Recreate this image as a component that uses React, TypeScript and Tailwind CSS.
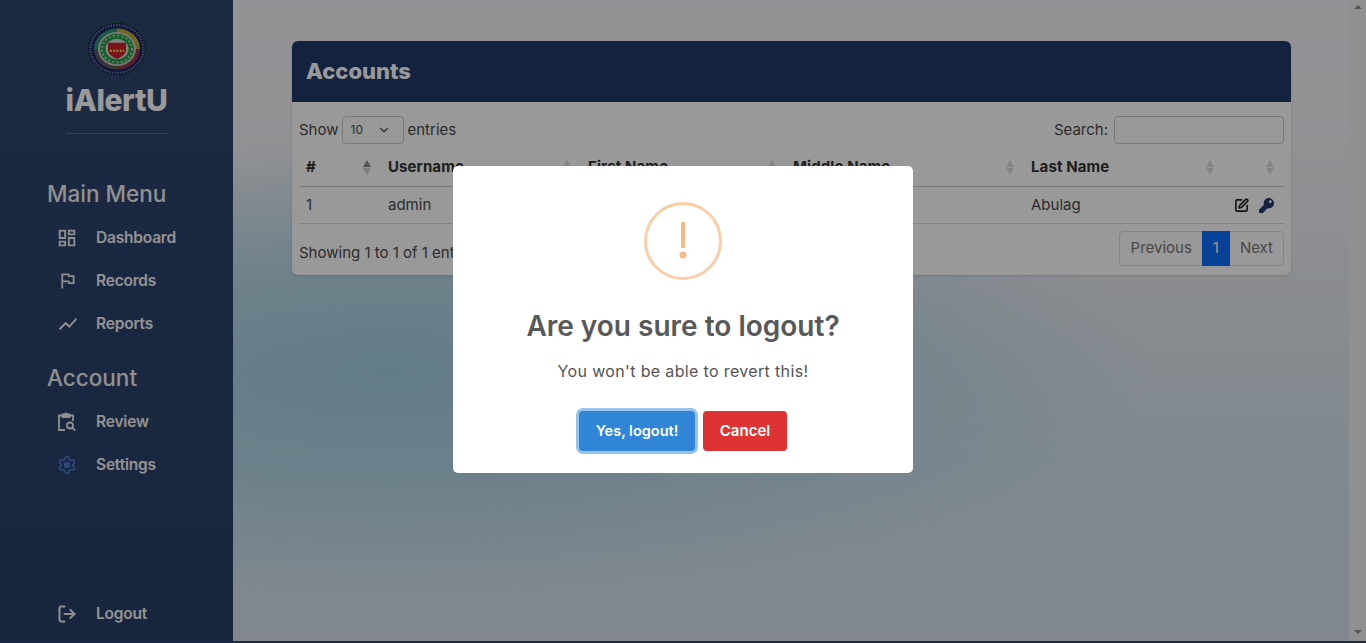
import { ChevronDown, LogOut, SquarePen } from "lucide-react"
import { FaKey } from "react-icons/fa"
import { MdOutlineDashboard, MdOutlineFlag, MdShowChart } from "react-icons/md"

const font = { fontFamily: '"Inter", "Noto Sans", sans-serif' }
const cols = "grid-cols-[82px_200px_205px_238px_200px_60px]"

const Logo = () => (
  <svg width="60" height="54" viewBox="0 0 60 60" preserveAspectRatio="none">
    <circle cx="30" cy="30" r="29.5" fill="#142060" stroke="#1d5a3a" strokeWidth="1" />
    <circle cx="30" cy="30" r="26.5" fill="none" stroke="#a8acb8" strokeWidth="3" strokeDasharray="1.5 1.3" opacity="0.6" />
    <path d="M30 7a23 23 0 0 1 23 23H30z" fill="#c2a83a" />
    <path d="M53 30a23 23 0 0 1-23 23V30z" fill="#943448" />
    <path d="M30 53A23 23 0 0 1 7 30h23z" fill="#5a5a60" />
    <path d="M7 30A23 23 0 0 1 30 7v23z" fill="#338f78" />
    <circle cx="30" cy="30" r="19" fill="#c8c8c4" />
    <circle cx="30" cy="30" r="17" fill="#20a046" />
    <circle cx="30" cy="30" r="15" fill="none" stroke="#c0c6bc" strokeWidth="2" strokeDasharray="2 2.4" />
    <circle cx="30" cy="30" r="11.5" fill="#d8d8d2" />
    <path d="M21 23h18v8c0 5-5 8-9 10-4-2-9-5-9-10z" fill="#c8242a" />
    <path d="M23 32h14" stroke="#eed44e" strokeWidth="2.5" strokeDasharray="2 1.2" />
  </svg>
)

const ReviewIcon = () => (
  <svg width="20" height="20" viewBox="0 0 20 20" fill="none" stroke="currentColor" strokeWidth="1.8">
    <path d="M8 18H2V3.5h3M12 3.5h4V9" />
    <path d="M5.5 5V2.5h1.8a1.8 1.8 0 0 1 3.4 0h1.8V5z" fill="currentColor" />
    <circle cx="13" cy="13.5" r="3" />
    <path d="M15.2 15.7l3 3" />
  </svg>
)

const GearIcon = () => (
  <svg width="20" height="20" viewBox="0 0 24 24" fill="none" stroke="#4a78d0" strokeWidth="2">
    <path d="M9.671 4.136a2.34 2.34 0 0 1 4.659 0 2.34 2.34 0 0 0 3.319 1.915 2.34 2.34 0 0 1 2.33 4.033 2.34 2.34 0 0 0 0 3.831 2.34 2.34 0 0 1-2.33 4.033 2.34 2.34 0 0 0-3.319 1.915 2.34 2.34 0 0 1-4.659 0 2.34 2.34 0 0 0-3.32-1.915 2.34 2.34 0 0 1-2.33-4.033 2.34 2.34 0 0 0 0-3.831A2.34 2.34 0 0 1 6.35 6.051a2.34 2.34 0 0 0 3.319-1.915" />
    <circle cx="12" cy="12" r="3" fill="#4a78d0" />
  </svg>
)

const SideItem = ({ icon, label }: { icon: React.ReactNode; label: string }) => (
  <div className="flex h-[43px] items-center">
    <div className="w-[96px] pl-[57px] text-[#f0f0f0]">{icon}</div>
    <span className="text-[15.5px] font-semibold tracking-[-0.2px] text-[#f5f5f5]">{label}</span>
  </div>
)

const Sort = ({ active }: { active?: boolean }) => (
  <span className="flex flex-col gap-px">
    <span className={`h-0 w-0 border-x-[4px] border-b-[7px] border-x-transparent ${active ? "border-b-[#8c8c8c]" : "border-b-[#dcdcdc]"}`} />
    <span className={`h-0 w-0 border-x-[4px] border-t-[7px] border-x-transparent ${active ? "border-t-[#cfcfcf]" : "border-t-[#dcdcdc]"}`} />
  </span>
)

const Th = ({ label, active }: { label: string; active?: boolean }) => (
  <div className="flex items-center justify-between pr-[10px] pl-[7px]">
    <span>{label}</span>
    <Sort active={active} />
  </div>
)

export default function App() {
  return (
    <div style={font} className="relative h-[643px] w-[1366px] overflow-hidden bg-[#f1f1f1]">
      <div className="flex h-[641px] w-full">
        <aside className="flex w-[233px] shrink-0 flex-col bg-[linear-gradient(180deg,#2e4670,#283f68)]">
          <div className="flex flex-col items-center pt-[22px]">
            <Logo />
            <h1 className="mt-[4px] text-[30px] leading-[40px] font-extrabold tracking-[-0.4px] text-white">iAlertU</h1>
            <div className="mt-[13px] h-px w-[101px] bg-[#5b6f90]" />
          </div>
          <h2 className="mt-[46px] pl-[47px] text-[22.5px] leading-[28px] font-medium text-[#f0f0f0]">Main Menu</h2>
          <div className="mt-[8px]">
            <SideItem icon={<MdOutlineDashboard size={22} className="-ml-[1px]" />} label="Dashboard" />
            <SideItem icon={<MdOutlineFlag size={21} />} label="Records" />
            <SideItem icon={<MdShowChart size={22} />} label="Reports" />
          </div>
          <h2 className="mt-[19px] pl-[47px] text-[22.5px] leading-[28px] font-medium text-[#f0f0f0]">Account</h2>
          <div className="mt-[8px]">
            <SideItem icon={<ReviewIcon />} label="Review" />
            <SideItem icon={<GearIcon />} label="Settings" />
          </div>
          <div className="mt-auto mb-[6px]">
            <SideItem icon={<LogOut size={20} strokeWidth={2.4} />} label="Logout" />
          </div>
        </aside>
        <main className="flex-1 bg-[radial-gradient(ellipse_760px_230px_at_14%_58%,#a4cfe2_0%,rgba(170,210,228,0.75)_45%,rgba(170,210,228,0)_100%),linear-gradient(180deg,#f6f6fc_0%,#f2f2f7_25%,#e6eaf0_46%,#d4e4ee_72%,#d9e1ee_100%)] pt-[41px] pr-[58px] pl-[59px]">
          <section className="h-[234px] rounded-md bg-white shadow-sm">
            <div className="flex h-[61px] items-center rounded-t-md bg-[#1e3a69] pl-[14px]">
              <span className="text-[22px] font-extrabold text-white">Accounts</span>
            </div>
            <div className="px-[7px] text-[15px] text-[#4a4a4a]">
              <div className="flex h-[46px] items-start justify-between pt-[14px]">
                <div className="flex items-center gap-[2px]">
                  <span>Show</span>
                  <div className="ml-[1px] flex h-[28px] w-[62px] items-center justify-between rounded border border-[#ccc] pr-3 pl-2 text-[12px]">
                    10 <ChevronDown size={14} />
                  </div>
                  <span className="ml-[2px]">entries</span>
                </div>
                <div className="flex items-center gap-[6px]">
                  <span>Search:</span>
                  <div className="h-[28px] w-[170px] rounded border border-[#ccc]" />
                </div>
              </div>
              <div className={`grid h-[39px] items-center border-b border-[#ccc] font-bold tracking-[0.1px] text-[#333] ${cols}`}>
                <Th label="#" active />
                <Th label="Username" />
                <Th label="First Name" />
                <Th label="Middle Name" />
                <Th label="Last Name" />
                <div className="flex justify-end pr-[10px]"><Sort /></div>
              </div>
              <div className={`grid h-[37px] items-center border-b border-[#ddd] ${cols}`}>
                <div className="pl-[7px]">1</div>
                <div className="pl-[7px]">admin</div>
                <div />
                <div />
                <div className="pl-[7px]">Abulag</div>
                <div className="flex justify-end gap-[10px] pr-[10px]">
                  <SquarePen size={15} strokeWidth={2.6} className="text-[#222]" />
                  <FaKey size={15} className="text-[#1e3a69]" />
                </div>
              </div>
              <div className="flex items-start justify-between pt-[7px]">
                <span className="pt-[12px] leading-[20px]">Showing 1 to 1 of 1 entries</span>
                <div className="flex h-[35px] items-center rounded border border-[#ddd] text-[#777]">
                  <span className="pr-[10px] pl-[11px]">Previous</span>
                  <span className="flex h-[35px] w-[28px] items-center justify-center bg-[#0d6efd] text-white">1</span>
                  <span className="px-[10px]">Next</span>
                </div>
              </div>
            </div>
          </section>
        </main>
        <div className="flex w-[17px] shrink-0 flex-col justify-between bg-[#f1f1f1] pt-[5px] pb-[7px]">
          <span className="mx-auto h-0 w-0 border-x-[4px] border-b-[4px] border-x-transparent border-b-[#8e8e8e]" />
          <span className="mx-auto h-0 w-0 border-x-[4px] border-t-[4px] border-x-transparent border-t-[#8e8e8e]" />
        </div>
      </div>
      <div className="h-[2px] bg-[#2d4878]" />
      {/* modal backdrop */}
      <div className="absolute inset-0 flex items-start justify-center bg-black/40 pt-[166px]">
        <div className="flex h-[307px] w-[460px] flex-col items-center rounded-[5px] bg-white">
          <div className="mt-[36px] flex h-[78px] w-[78px] items-center justify-center rounded-full border-[3px] border-[#facea8]">
            <svg width="10" height="40" viewBox="0 0 10 40">
              <rect x="3" y="1" width="4" height="26" fill="#f8bb86" />
              <circle cx="5" cy="34" r="3.5" fill="#f8bb86" />
            </svg>
          </div>
          <h2 className="mt-[28px] text-[28px] leading-[36px] font-semibold text-[#595959]">Are you sure to logout?</h2>
          <p className="mt-[15px] text-[16px] leading-[24px] tracking-[0.35px] text-[#545454]">You won't be able to revert this!</p>
          <div className="mt-[28px] flex items-center gap-[8px]">
            <button className="h-[40px] w-[116px] rounded bg-[#3085d6] text-[14.5px] font-semibold text-white shadow-[0_0_0_3px_rgba(48,133,214,0.5)]">Yes, logout!</button>
            <button className="h-[40px] w-[84px] rounded bg-[#dd3333] text-[15px] font-semibold text-white">Cancel</button>
          </div>
        </div>
      </div>
    </div>
  )
}
